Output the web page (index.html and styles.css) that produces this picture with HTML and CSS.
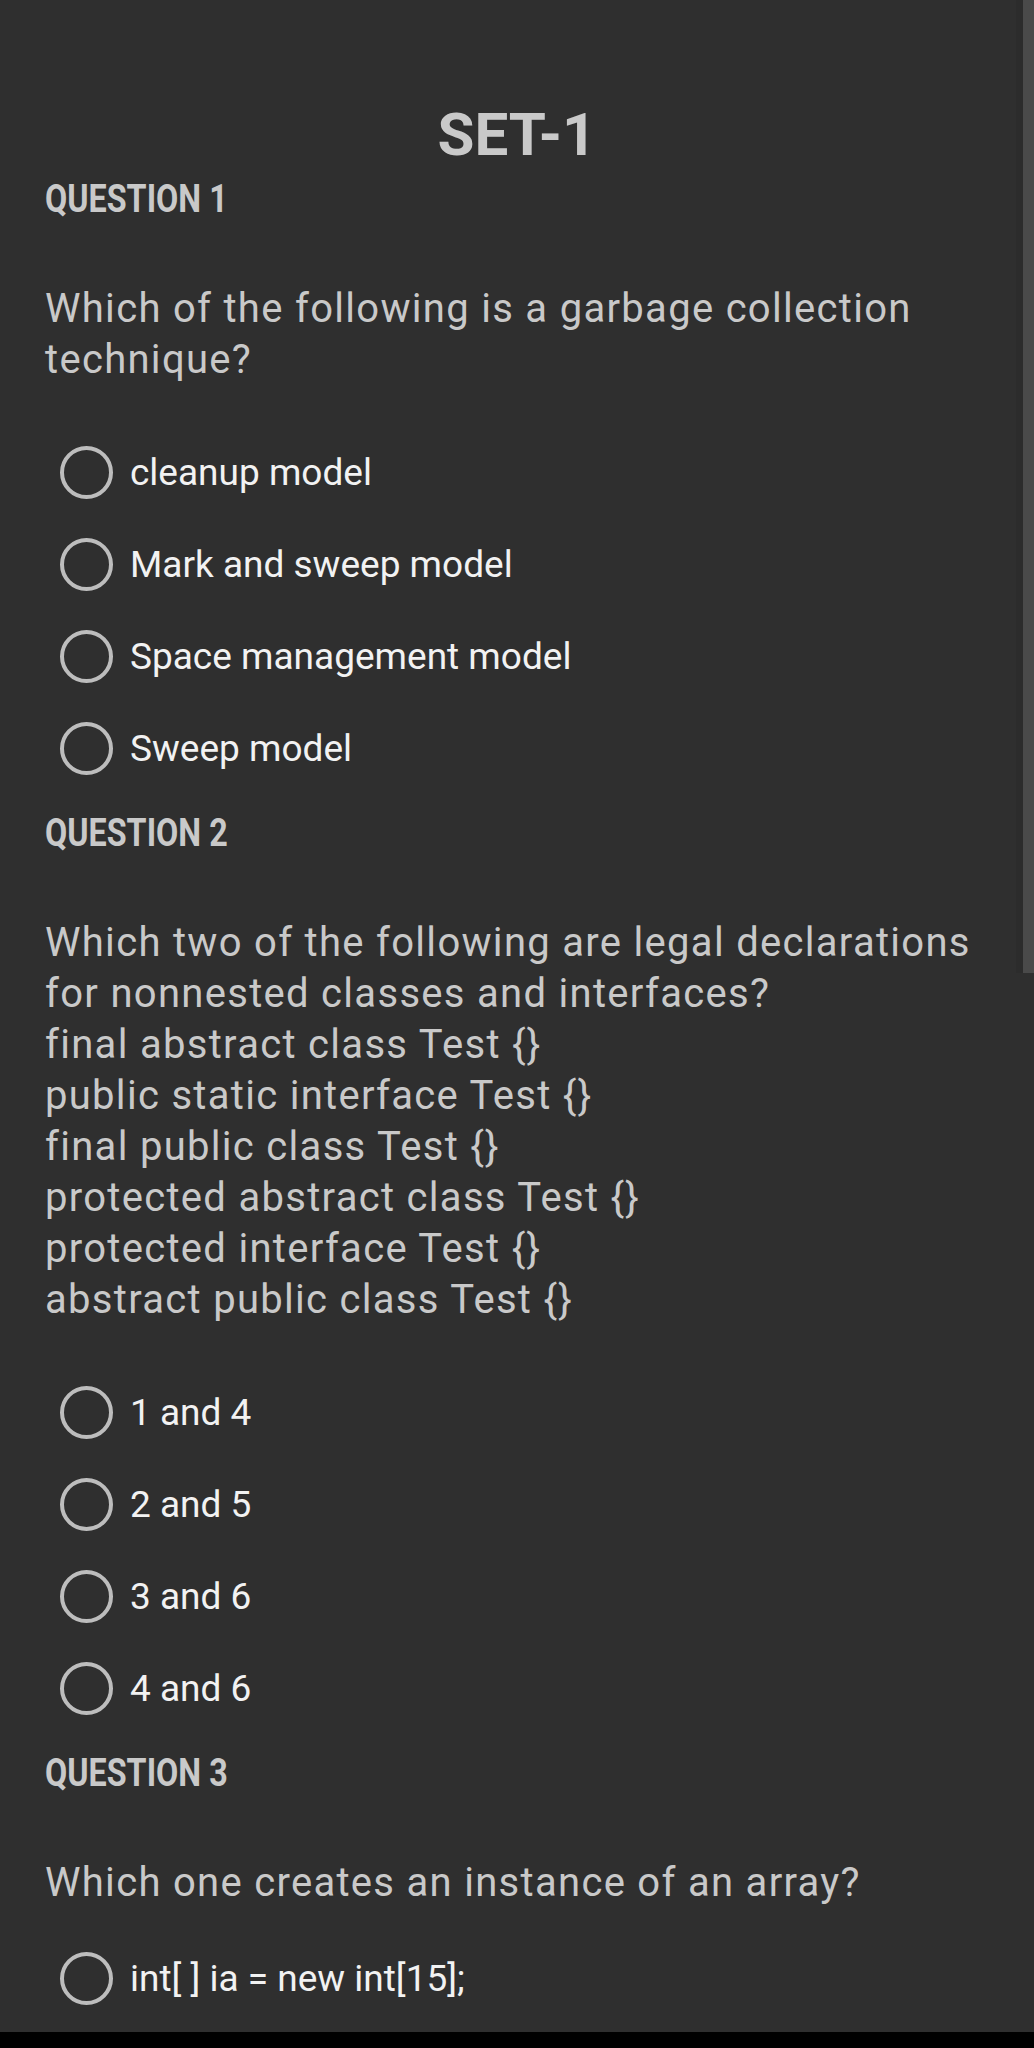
FILE: index.html
```html
<!DOCTYPE html>
<html lang="en">
<head>
<meta charset="utf-8">
<title>SET-1</title>
<link rel="stylesheet" href="styles.css">
</head>
<body>
<div class="screen">
  <div class="content">
    <h1 class="title">SET-1</h1>

    <section class="question">
      <h2 class="qlabel"><span>QUESTION 1</span></h2>
      <p class="qtext">Which of the following is a garbage collection technique?</p>
      <ul class="options">
        <li class="option"><span class="radio"></span><span class="otext">cleanup model</span></li>
        <li class="option"><span class="radio"></span><span class="otext">Mark and sweep model</span></li>
        <li class="option"><span class="radio"></span><span class="otext">Space management model</span></li>
        <li class="option"><span class="radio"></span><span class="otext">Sweep model</span></li>
      </ul>
    </section>

    <section class="question">
      <h2 class="qlabel"><span>QUESTION 2</span></h2>
      <p class="qtext">Which two of the following are legal declarations for nonnested classes and interfaces?<br>final abstract class Test {}<br>public static interface Test {}<br>final public class Test {}<br>protected abstract class Test {}<br>protected interface Test {}<br>abstract public class Test {}</p>
      <ul class="options">
        <li class="option"><span class="radio"></span><span class="otext">1 and 4</span></li>
        <li class="option"><span class="radio"></span><span class="otext">2 and 5</span></li>
        <li class="option"><span class="radio"></span><span class="otext">3 and 6</span></li>
        <li class="option"><span class="radio"></span><span class="otext">4 and 6</span></li>
      </ul>
    </section>

    <section class="question">
      <h2 class="qlabel"><span>QUESTION 3</span></h2>
      <p class="qtext">Which one creates an instance of an array?</p>
      <ul class="options options-tight">
        <li class="option"><span class="radio"></span><span class="otext">int[ ] ia = new int[15];</span></li>
      </ul>
    </section>
  </div>
  <div class="scrollbar"></div>
</div>
<div class="navbar"></div>
</body>
</html>
```

FILE: styles.css
```css
html, body {
  margin: 0;
  padding: 0;
}

body {
  background: #000;
  font-family: Roboto, "Noto Sans", "Liberation Sans", sans-serif;
  color: #c9c9c9;
}

.screen {
  position: relative;
  height: 2032px;
  background: #2f2f2f;
  overflow: hidden;
}

.content {
  padding: 100px 45px 0 45px;
}

.title {
  margin: 0;
  font-size: 60px;
  line-height: 70px;
  font-weight: 700;
  text-align: center;
  color: #c9c9c9;
}

.question {
  margin-top: 17px;
}

.question:first-of-type {
  margin-top: 7px;
}

.qlabel {
  margin: 0;
  font-size: 38px;
  line-height: 44px;
  font-weight: 700;
  color: #c9c9c9;
}

.qlabel span {
  display: inline-block;
  transform: scaleX(0.85);
  transform-origin: left center;
}

.qtext {
  margin: 62px 0 0 0;
  font-size: 40px;
  line-height: 51px;
  letter-spacing: 1.3px;
  color: #c9c9c9;
}

.options {
  list-style: none;
  margin: 41px 0 0 0;
  padding: 0;
}

.options-tight {
  margin-top: 24px;
}

.option {
  display: flex;
  align-items: center;
  height: 92px;
  padding-left: 15px;
}

.radio {
  flex: none;
  box-sizing: border-box;
  width: 53px;
  height: 53px;
  border: 4.5px solid #bdbdbd;
  border-radius: 50%;
  margin-right: 17px;
}

.otext {
  font-size: 37px;
  color: #f2f2f2;
}

.scrollbar {
  position: absolute;
  top: 0;
  right: 0;
  width: 11px;
  height: 973px;
  background: #4a4a4a;
  border-left: 7px solid #2c2c2c;
}

.navbar {
  height: 16px;
  background: #000;
}
```
